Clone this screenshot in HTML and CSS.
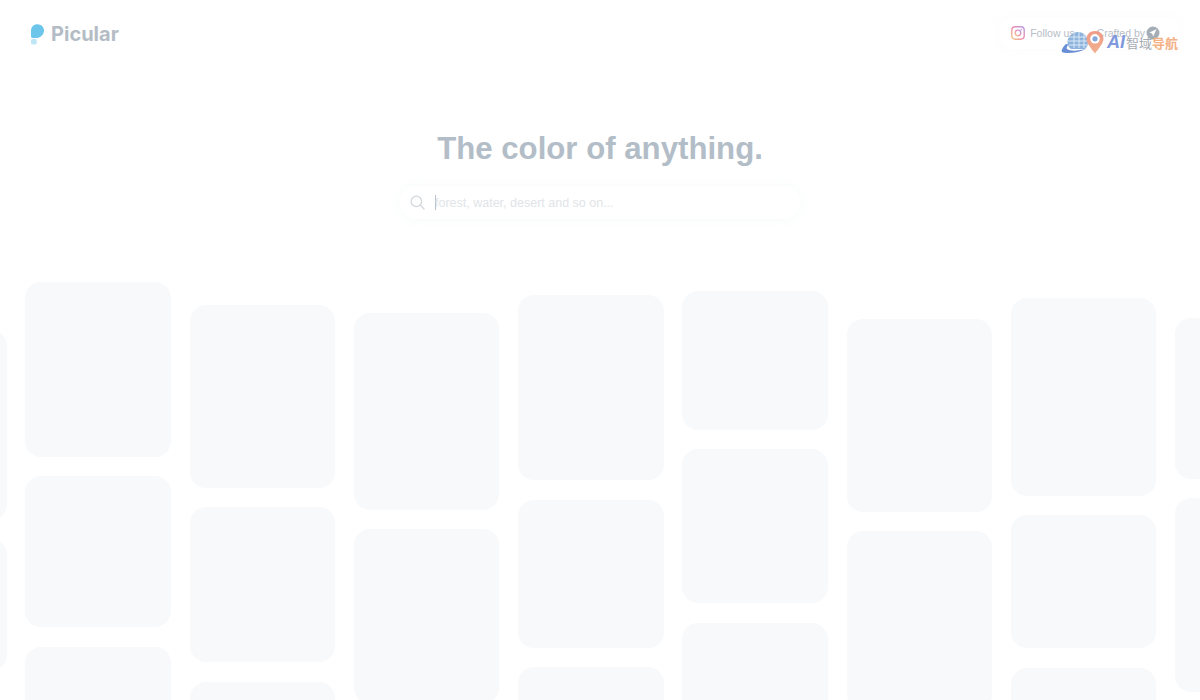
FILE: index.html
```html
<!DOCTYPE html>
<html lang="en">
<head>
<meta charset="utf-8">
<title>Picular</title>
<link rel="stylesheet" href="styles.css">
</head>
<body>
<header class="topbar">
  <a class="brand">
    <svg class="brand-mark" viewBox="0 0 16 21" width="16" height="21">
      <path d="M1 6.500C1 2.900 3.800.2 7.400.2c3.700 0 6.600 2.800 6.600 6.400 0 3.600-2.900 6.700-6.600 7.300H2.800c-1 0-1.800-.7-1.800-1.700z" fill="#6cc5ea"/>
      <rect x="1" y="14.800" width="5.800" height="5.800" rx="2.200" fill="#bfe6f5"/>
    </svg>
    <span class="brand-name">Picular</span>
  </a>
  <div class="social">
    <svg class="insta" viewBox="0 0 14 14" width="14" height="14">
      <defs><linearGradient id="ig" x1="0" y1="1" x2="1" y2="0"><stop offset="0" stop-color="#f5c889"/><stop offset=".5" stop-color="#ee8fb0"/><stop offset="1" stop-color="#b79ae0"/></linearGradient></defs>
      <rect x=".8" y=".8" width="12.400" height="12.400" rx="3.400" fill="none" stroke="url(#ig)" stroke-width="1.400"/>
      <circle cx="7" cy="7" r="2.800" fill="none" stroke="url(#ig)" stroke-width="1.300"/>
      <circle cx="10.400" cy="3.600" r=".8" fill="#c99ad8"/>
    </svg>
    <span class="social-text">Follow us</span>
    <span class="social-text crafted">Crafted by</span>
    <svg class="badge" viewBox="0 0 14 14" width="14" height="14">
      <circle cx="7" cy="7" r="6.500" fill="#a4adb6"/>
      <path d="M10.500 3.300 3.400 6.600l2.800 1 .9 2.900z" fill="#fff"/>
    </svg>
  </div>
  <div class="watermark">
    <svg class="wm-globe" viewBox="0 0 46 24" width="46" height="24">
      <defs><linearGradient id="pin" x1="0" y1="0" x2="0" y2="1"><stop offset="0" stop-color="#ee8c74"/><stop offset="1" stop-color="#f0a37a"/></linearGradient></defs>
      <path d="M17 2c5.500 0 10 4.500 10 10 0 3-1 5-3 7H10c-2.500-2-3.500-4.500-3.500-7C6.500 6.500 11.500 2 17 2z" fill="#7ba6d8"/>
      <path d="M8 7h18M7 11h20M8 15h18M13 3v15M18 2v16M23 4v14" stroke="#d6e6f6" stroke-width="1" fill="none"/>
      <path d="M5 14C2 17 0 20 1 22c3 2 16 1.500 25-3.500-8 2.500-17 3-20 .5-.8-1 0-3 1.500-4.500z" fill="#4f7ccf"/>
      <path d="M34 1c-5 0-8.500 3.500-8.500 7.800C25.500 13.500 31 19.500 34 23.500c3-4 8.500-10 8.500-14.700C42.500 4.500 39 1 34 1z" fill="url(#pin)"/>
      <circle cx="34" cy="8.800" r="4.800" fill="#fff"/>
      <circle cx="34" cy="8.800" r="2.600" fill="#6d9ad8"/>
    </svg>
    <span class="wm-ai">AI</span><span class="wm-mid">智域</span><span class="wm-end">导航</span>
  </div>
</header>

<section class="hero">
  <h1 class="headline">The color of anything.</h1>
  <div class="search">
    <svg class="search-icon" viewBox="0 0 16 16" width="15" height="15">
      <circle cx="6.800" cy="6.800" r="5.600" fill="none" stroke="#d3d8dd" stroke-width="1.400"/>
      <path d="m11 11 4 4" stroke="#d3d8dd" stroke-width="1.400" stroke-linecap="round"/>
    </svg>
    <span class="caret"></span>
    <span class="placeholder">forest, water, desert and so on...</span>
  </div>
</section>

<main class="wall">
  <div class="col c0"><div class="tile h190"></div><div class="tile h132"></div></div>
  <div class="col c1"><div class="tile h175"></div><div class="tile h151"></div><div class="tile h160"></div></div>
  <div class="col c2"><div class="tile h183"></div><div class="tile h155"></div><div class="tile h160"></div></div>
  <div class="col c3"><div class="tile h197"></div><div class="tile h175"></div></div>
  <div class="col c4"><div class="tile h185"></div><div class="tile h148"></div><div class="tile h160"></div></div>
  <div class="col c5"><div class="tile h139"></div><div class="tile h154"></div><div class="tile h160"></div></div>
  <div class="col c6"><div class="tile h193"></div><div class="tile h180"></div></div>
  <div class="col c7"><div class="tile h198"></div><div class="tile h133"></div><div class="tile h160"></div></div>
  <div class="col c8"><div class="tile h161"></div><div class="tile h194"></div></div>
</main>
</body>
</html>
```
FILE: styles.css
```css
* { box-sizing: border-box; }
html, body { height: 100%; }
body {
  margin: 0;
  height: 700px;
  overflow: hidden;
  background: #fff;
  font-family: "Liberation Sans", Arial, sans-serif;
}
.topbar {
  position: relative;
  height: 68px;
  padding: 0 20px 0 30px;
  display: flex;
  align-items: center;
  justify-content: space-between;
}
.brand { display: flex; align-items: center; gap: 5px; }
.brand-mark { display: block; }
.brand-name {
  font-family: "Inter", sans-serif;
  font-weight: 700;
  font-size: 20px;
  color: #b4bdc6;
}
.social {
  height: 32px;
  margin-top: -3px;
  padding: 0 20px 0 11px;
  border-radius: 12px;
  display: flex;
  align-items: center;
  box-shadow: 0 0 12px rgba(200, 210, 220, .08);
}
.insta { margin-right: 5px; }
.social-text { font-size: 10.500px; color: #b6bdc6; }
.crafted { margin-left: 22px; margin-right: 1px; }
.watermark {
  position: absolute;
  left: 1061px;
  top: 30px;
  display: flex;
  align-items: center;
  height: 24px;
  font-family: "Noto Sans CJK SC", sans-serif;
}
.wm-globe { display: block; opacity: .85; }
.wm-ai { font-family: "Liberation Sans", sans-serif; font-style: italic; font-weight: 700; font-size: 18px; color: #8099dd; margin-right: 1px; }
.wm-mid { font-size: 13px; color: #a5abb3; }
.wm-end { font-size: 13px; font-weight: 700; color: #f3b185; }

.hero {
  display: flex;
  flex-direction: column;
  align-items: center;
  padding-top: 61px;
}
.headline {
  margin: 0;
  font-size: 31.200px;
  line-height: 40px;
  font-weight: 700;
  color: #b2bdc7;
}
.search {
  width: 400px;
  height: 33px;
  margin-top: 17px;
  padding: 0 12px 0 10px;
  border-radius: 16px;
  background: #fff;
  display: flex;
  align-items: center;
  box-shadow: 0 0 12px rgba(200, 215, 225, .16);
}
.caret { width: 1px; height: 15px; background: #b9c1c9; margin-left: 10px; }
.placeholder { font-size: 12.500px; color: #e1e4e8; margin-left: -1px; }

.wall {
  position: absolute;
  top: 0;
  left: -139px;
  display: flex;
  gap: 18.750px;
}
.col { width: 145.500px; display: flex; flex-direction: column; gap: 19.450px; flex: none; }
.c0 { padding-top: 330px; }
.c1 { padding-top: 282px; }
.c2 { padding-top: 305px; }
.c3 { padding-top: 313px; }
.c4 { padding-top: 295.200px; }
.c5 { padding-top: 291px; }
.c6 { padding-top: 319px; }
.c7 { padding-top: 298px; }
.c8 { padding-top: 318px; }
.tile { border-radius: 16px; background: #f8f9fb; flex: none; }
.h132 { height: 132px; }
.h133 { height: 133px; }
.h139 { height: 139px; }
.h148 { height: 148px; }
.h151 { height: 151px; }
.h154 { height: 154px; }
.h155 { height: 155px; }
.h160 { height: 160px; }
.h161 { height: 161px; }
.h175 { height: 175px; }
.h180 { height: 180px; }
.h183 { height: 183px; }
.h185 { height: 185px; }
.h190 { height: 190px; }
.h193 { height: 193px; }
.h194 { height: 194px; }
.h197 { height: 197px; }
.h198 { height: 198px; }
```
